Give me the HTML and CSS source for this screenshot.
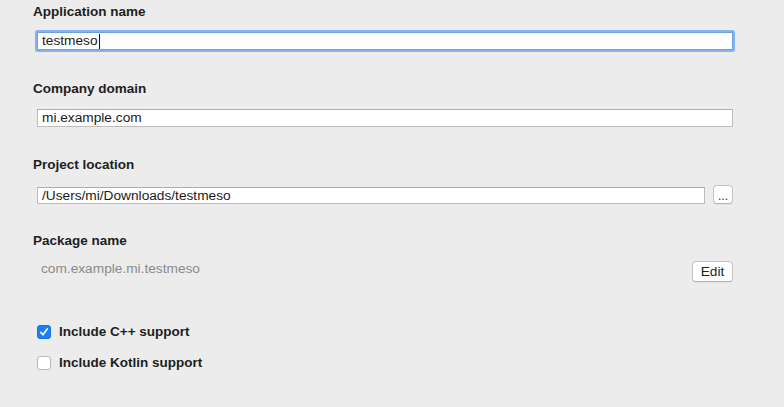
FILE: index.html
```html
<!DOCTYPE html>
<html lang="en">

<head>
    <meta charset="UTF-8">
    <meta name="viewport" content="width=device-width, initial-scale=1.0">
    <title>New Project</title>
    <link rel="stylesheet" href="styles.css">
</head>

<body>
    <div class="form">
        <div class="group group-app">
            <h4>Application name</h4>
            <div class="field focused"><span>testmeso</span><span class="caret"></span></div>
        </div>

        <div class="group group-domain">
            <h4>Company domain</h4>
            <div class="field"><span>mi.example.com</span></div>
        </div>

        <div class="group group-location">
            <h4>Project location</h4>
            <div class="field-row">
                <div class="field"><span>/Users/mi/Downloads/testmeso</span></div>
                <button class="btn btn-browse">...</button>
            </div>
        </div>

        <div class="group group-package">
            <h4>Package name</h4>
            <div class="package-row">
                <span class="package">com.example.mi.testmeso</span>
                <button class="btn btn-edit">Edit</button>
            </div>
        </div>

        <div class="options">
            <label class="check-row">
                <span class="check checked">
                    <svg width="10" height="10" viewBox="0 0 10 10"><polyline points="1.8,5.4 4,7.8 8.4,1.8" fill="none" stroke="#fff" stroke-width="1.6" stroke-linecap="round" stroke-linejoin="round"/></svg>
                </span>
                Include C++ support
            </label>
            <label class="check-row">
                <span class="check"></span>
                Include Kotlin support
            </label>
        </div>
    </div>
</body>
</html>
```

FILE: styles.css
```css
* {
    margin: 0;
    padding: 0;
    box-sizing: border-box;
}

body {
    width: 784px;
    height: 407px;
    background: #ececec;
    font-family: 'Liberation Sans', Arial, sans-serif;
    font-size: 13.7px;
    color: #1e1e1e;
    overflow: hidden;
}

.form {
    padding: 4px 51px 0 33px;
}

h4 {
    font-size: 13.5px;
    line-height: 16px;
    font-weight: bold;
    color: #1e1e1e;
    margin-bottom: 12px;
}

.field {
    height: 18px;
    margin-left: 4px;
    background: #fff;
    border: 1px solid #bcbcbc;
    border-top-color: #adadad;
    padding-left: 4px;
    line-height: 16px;
    color: #1a1a1a;
    display: flex;
    align-items: center;
    white-space: nowrap;
}

.field.focused {
    border-color: #6d9fe2;
    box-shadow: 0 0 0 2px #84b4ef;
    border-radius: 1px;
}

.caret {
    display: inline-block;
    width: 1px;
    height: 15px;
    background: #111;
    margin-left: 1px;
}

.group-app {
    margin-bottom: 31px;
}

.group-domain {
    margin-bottom: 30px;
}

.group-location {
    margin-bottom: 29px;
}

.field-row {
    display: flex;
    align-items: flex-start;
    gap: 8px;
}

.field-row .field {
    flex: 1;
    height: 17px;
    margin-top: 2px;
}

.btn {
    font-family: 'Liberation Sans', Arial, sans-serif;
    font-size: 13.7px;
    color: #1e1e1e;
    background: #fff;
    border: 1px solid #c4c4c4;
    border-bottom-color: #b3b3b3;
    border-radius: 4px;
    box-shadow: 0 1px 0 rgba(0, 0, 0, 0.04);
}

.btn-browse {
    width: 20px;
    height: 19px;
    line-height: 15px;
    font-size: 12px;
    padding-top: 3px;
}

.package-row {
    display: flex;
    justify-content: space-between;
    align-items: flex-start;
}

.package {
    margin-left: 8px;
    line-height: 16px;
    color: #8a8a8a;
}

.btn-edit {
    width: 41px;
    height: 21px;
    line-height: 19px;
}

.options {
    margin-top: 42px;
}

.check-row {
    display: flex;
    align-items: center;
    gap: 8px;
    height: 16px;
    margin-left: 4px;
    margin-bottom: 15px;
    font-size: 13.5px;
    font-weight: bold;
    line-height: 16px;
}

.check {
    width: 14px;
    height: 14px;
    border-radius: 3px;
    background: #fff;
    border: 1px solid #b9b9b9;
    display: flex;
    align-items: center;
    justify-content: center;
}

.check.checked {
    background: #1b7ff6;
    border-color: #1672e0;
}
```
